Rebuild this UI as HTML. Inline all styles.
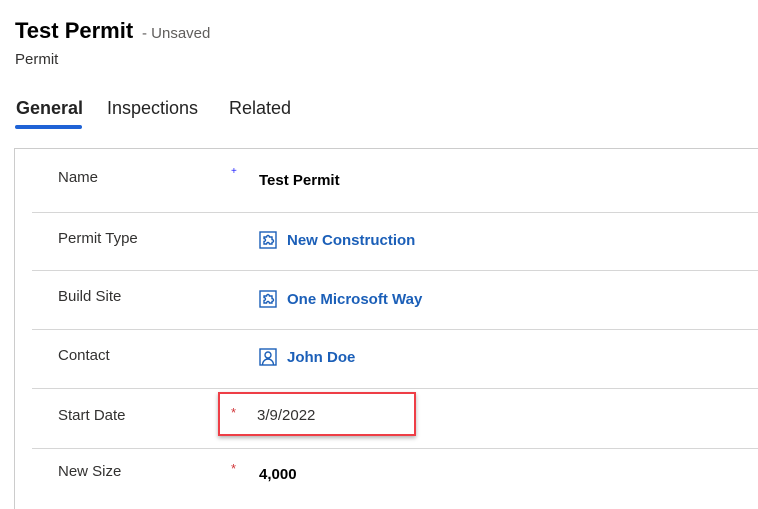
<!DOCTYPE html>
<html><head><meta charset="utf-8"><style>
body{margin:0;width:758px;height:496px;background:#fff;font-family:"Liberation Sans",sans-serif;position:relative;overflow:hidden;color:#242424}
.a{position:absolute;white-space:nowrap}
.lbl{font-size:15px;color:#323130;left:58px}
.val{font-size:15px;font-weight:bold;color:#000;left:259px}
.lnk{font-size:15px;font-weight:bold;color:#1b5fb8;left:287px}
.sep{position:absolute;left:32px;right:0;height:1px;background:#d6d6d6}
.ic{position:absolute;left:259px;width:18px;height:18px}
.star{position:absolute;left:231px;color:#d13438;font-size:13px}
</style></head><body>
<div class="a" style="left:15px;top:18px;font-size:22px;font-weight:bold;color:#000">Test Permit</div>
<div class="a" style="left:142px;top:25px;font-size:15px;color:#605e5c">- Unsaved</div>
<div class="a" style="left:15px;top:51px;font-size:15px;color:#323130">Permit</div>
<div class="a" style="left:16px;top:98px;font-size:18px;font-weight:bold;color:#242424">General</div>
<div class="a" style="left:107px;top:98px;font-size:18px;color:#242424">Inspections</div>
<div class="a" style="left:229px;top:98px;font-size:18px;color:#242424">Related</div>
<div class="a" style="left:15px;top:125px;width:67px;height:4px;border-radius:2px;background:#1f63d6"></div>
<div class="a" style="left:14px;top:148px;width:760px;height:360px;border-left:1px solid #ccc;border-top:1px solid #ccc"></div>
<div class="a lbl" style="top:169px">Name</div>
<div class="a" style="left:231px;top:166px;color:#2020ff;font-size:10px">+</div>
<div class="a val" style="top:172px">Test Permit</div>
<div class="sep" style="top:212px"></div>
<div class="a lbl" style="top:230px">Permit Type</div>
<svg class="ic" style="top:231px" viewBox="0 0 18 18" fill="none" stroke="#1b5fb8" stroke-width="1.4"><rect x="1" y="1" width="16" height="16"/><path d="M5 6h2.5a1.5 1.5 0 0 1 3 0H13v2.5a1.5 1.5 0 0 1 0 3V13h-2.5a1.5 1.5 0 0 0-3 0H5v-2.5a1.5 1.5 0 0 0 0-3z"/></svg>
<div class="a lnk" style="top:232px">New Construction</div>
<div class="sep" style="top:270px"></div>
<div class="a lbl" style="top:288px">Build Site</div>
<svg class="ic" style="top:290px" viewBox="0 0 18 18" fill="none" stroke="#1b5fb8" stroke-width="1.4"><rect x="1" y="1" width="16" height="16"/><path d="M5 6h2.5a1.5 1.5 0 0 1 3 0H13v2.5a1.5 1.5 0 0 1 0 3V13h-2.5a1.5 1.5 0 0 0-3 0H5v-2.5a1.5 1.5 0 0 0 0-3z"/></svg>
<div class="a lnk" style="top:291px">One Microsoft Way</div>
<div class="sep" style="top:329px"></div>
<div class="a lbl" style="top:347px">Contact</div>
<svg class="ic" style="top:348px" viewBox="0 0 18 18" fill="none" stroke="#1b5fb8" stroke-width="1.4"><rect x="1" y="1" width="16" height="16"/><circle cx="9" cy="7" r="3"/><path d="M3.5 17c0-3.5 2.5-6 5.5-6s5.5 2.5 5.5 6"/></svg>
<div class="a lnk" style="top:349px">John Doe</div>
<div class="sep" style="top:388px"></div>
<div class="a lbl" style="top:407px">Start Date</div>
<div class="star" style="top:405px">*</div>
<div class="a" style="left:257px;top:407px;font-size:15px;color:#323130">3/9/2022</div>
<div class="a" style="left:218px;top:392px;width:194px;height:40px;border:2px solid #ee3e46;box-shadow:0 2px 4px rgba(0,0,0,.3)"></div>
<div class="sep" style="top:448px"></div>
<div class="a lbl" style="top:463px">New Size</div>
<div class="star" style="top:461px">*</div>
<div class="a val" style="top:466px">4,000</div>
</body></html>
